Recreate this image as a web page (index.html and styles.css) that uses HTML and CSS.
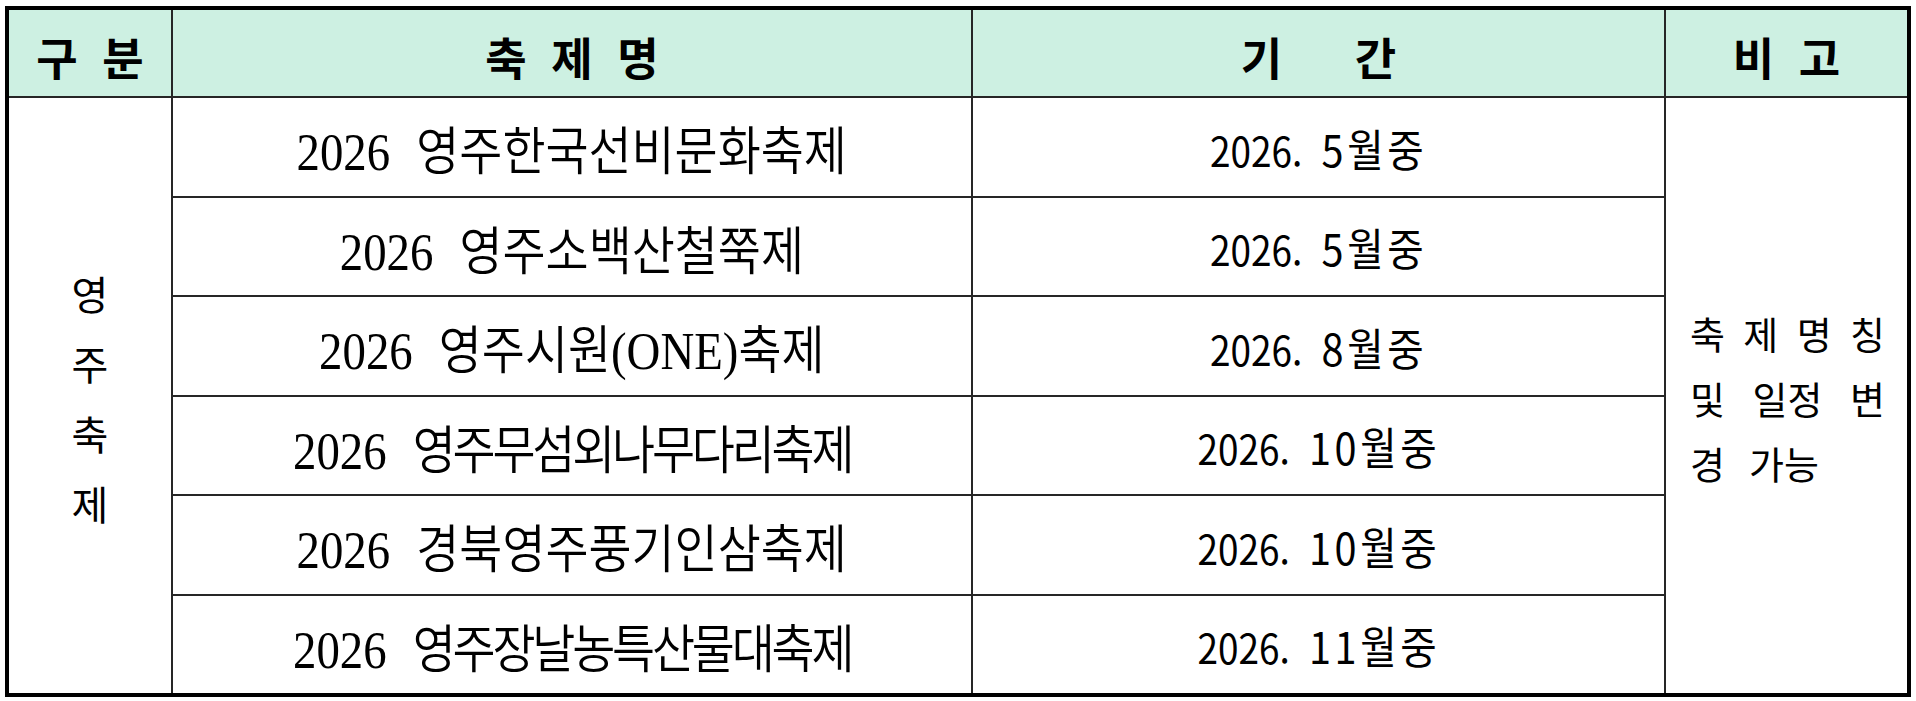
FILE: index.html
```html
<!DOCTYPE html>
<html lang="ko">
<head>
<meta charset="utf-8">
<title>영주 축제 일정</title>
<link rel="stylesheet" href="styles.css">
</head>
<body>
<div class="sheet">
  <div class="cell head"><span class="ht">구 분</span></div>
  <div class="cell head"><span class="ht">축 제 명</span></div>
  <div class="cell head"><span class="ht wide">기 간</span></div>
  <div class="cell head"><span class="ht">비 고</span></div>

  <div class="cell side">
    <span>영</span><span>주</span><span>축</span><span>제</span>
  </div>

  <div class="cell name"><span class="fest"><span class="num">2026</span> <span class="ko">영주한국선비문화축제</span></span></div>
  <div class="cell date"><span class="period">2026. <span class="m">5월중</span></span></div>

  <div class="cell note">
    <div class="line"><span>축</span><span>제</span><span>명</span><span>칭</span></div>
    <div class="line"><span>및</span><span>일정</span><span>변</span></div>
    <div class="line last"><span>경</span><span>가능</span></div>
  </div>

  <div class="cell name"><span class="fest"><span class="num">2026</span> <span class="ko">영주소백산철쭉제</span></span></div>
  <div class="cell date"><span class="period">2026. <span class="m">5월중</span></span></div>

  <div class="cell name"><span class="fest"><span class="num">2026</span> <span class="ko">영주시원</span>(ONE)<span class="ko">축제</span></span></div>
  <div class="cell date"><span class="period">2026. <span class="m">8월중</span></span></div>

  <div class="cell name"><span class="fest long"><span class="num">2026</span> <span class="ko">영주무섬외나무다리축제</span></span></div>
  <div class="cell date"><span class="period">2026. <span class="m">10월중</span></span></div>

  <div class="cell name"><span class="fest"><span class="num">2026</span> <span class="ko">경북영주풍기인삼축제</span></span></div>
  <div class="cell date"><span class="period">2026. <span class="m">10월중</span></span></div>

  <div class="cell name"><span class="fest long"><span class="num">2026</span> <span class="ko">영주장날농특산물대축제</span></span></div>
  <div class="cell date"><span class="period">2026. <span class="m">11월중</span></span></div>
</div>
</body>
</html>
```

FILE: styles.css
```css
html, body {
  margin: 0;
  padding: 0;
  background: #ffffff;
}

body {
  padding: 6px 0 0 5px;
  font-family: "Noto Sans CJK KR", "Noto Sans", sans-serif;
  color: #000;
}

.sheet {
  width: 1898px;
  height: 683px;
  border: 4px solid #000;
  background: #262626;
  display: grid;
  grid-template-columns: 162px 798px 691px 241px;
  grid-template-rows: 86px repeat(6, 1fr);
  gap: 2px;
}

.cell {
  background: #fff;
  display: flex;
  align-items: center;
  justify-content: center;
  overflow: hidden;
}

.head {
  background: #cdf0e2;
}

.ht {
  font-size: 45px;
  font-weight: 700;
  letter-spacing: 6px;
  line-height: 1;
  padding-top: 6px;
  margin-right: -6px;
}

.ht.wide {
  word-spacing: 48px;
}

.side {
  grid-column: 1;
  grid-row: 2 / span 6;
  flex-direction: column;
  font-size: 40px;
  line-height: 70px;
  padding-top: 4px;
}

.side span {
  display: block;
}

.name {
  grid-column: 2;
  padding-top: 8px;
}

.date {
  grid-column: 3;
  padding-top: 2px;
}

.fest {
  display: inline-block;
  font-family: "Liberation Serif", "Noto Sans CJK KR", serif;
  font-size: 52px;
  line-height: 1;
  white-space: nowrap;
  transform: scaleX(0.9);
}

.fest .num {
  margin-right: 16px;
}

.fest .ko {
  font-family: "Noto Sans CJK KR", sans-serif;
  font-weight: 350;
  letter-spacing: 0;
}

.fest.long .ko {
  letter-spacing: -0.068em;
}

.period {
  display: inline-block;
  font-size: 41px;
  line-height: 1;
  white-space: nowrap;
  transform: scaleX(0.9);
}

.period .m {
  margin-left: 10px;
  font-size: 44px;
  letter-spacing: 4px;
}

.note {
  grid-column: 4;
  grid-row: 2 / span 6;
  flex-direction: column;
  align-items: stretch;
  padding: 4px 22px 0 24px;
  font-size: 38px;
}

.line {
  display: flex;
  justify-content: space-between;
  line-height: 65px;
}

.line.last {
  justify-content: flex-start;
  gap: 24px;
}
```
